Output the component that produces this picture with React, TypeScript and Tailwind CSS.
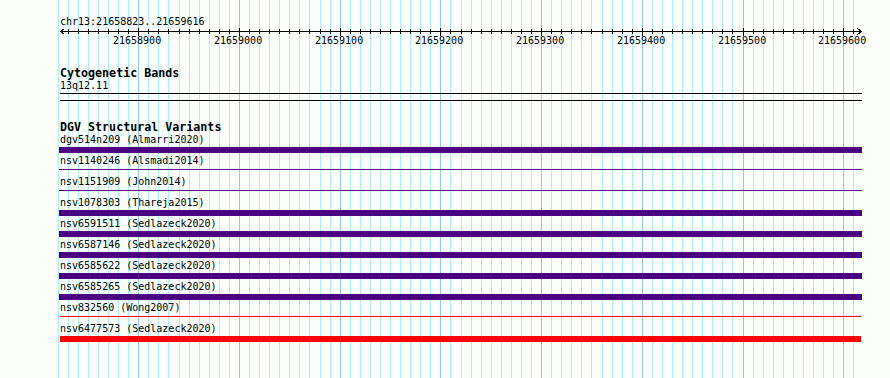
import React from "react";

const mono = "font-['DejaVu_Sans_Mono',monospace]";

// 10 bp per grid step, ~1.007 px per bp
const gridX = (i: number) => Math.round(57.7 + i * 10.071);
const GRID = Array.from({ length: 80 }, (_, i) => i);

const rows = [
  { label: "dgv514n209 (Almarri2020)", kind: "thick", tone: "purple" },
  { label: "nsv1140246 (Alsmadi2014)", kind: "thin", tone: "purple" },
  { label: "nsv1151909 (John2014)", kind: "thin", tone: "purple" },
  { label: "nsv1078303 (Thareja2015)", kind: "thick", tone: "purple" },
  { label: "nsv6591511 (Sedlazeck2020)", kind: "thick", tone: "purple" },
  { label: "nsv6587146 (Sedlazeck2020)", kind: "thick", tone: "purple" },
  { label: "nsv6585622 (Sedlazeck2020)", kind: "thick", tone: "purple" },
  { label: "nsv6585265 (Sedlazeck2020)", kind: "thick", tone: "purple" },
  { label: "nsv832560 (Wong2007)", kind: "thin", tone: "red" },
  { label: "nsv6477573 (Sedlazeck2020)", kind: "thick", tone: "red" },
];

function Grid() {
  return (
    <svg className="absolute inset-0" width={890} height={378} shapeRendering="crispEdges">
      {GRID.map((i) => (
        <rect
          key={i}
          x={gridX(i)}
          y={0}
          width={1}
          height={378}
          fill={i % 10 === 8 ? "#8ccbea" : "#aeeef2"}
        />
      ))}
    </svg>
  );
}

function Ruler() {
  const ticks = GRID.filter((i) => i >= 1);
  return (
    <svg width={890} height={22} shapeRendering="crispEdges" className="block">
      <rect x={60} y={3} width={802} height={1} fill="#000" />
      {ticks.map((i) => {
        const major = i % 10 === 8;
        return (
          <rect
            key={i}
            x={gridX(i)}
            y={major ? 0 : 1}
            width={1}
            height={major ? 8 : 5}
            fill="#000"
          />
        );
      })}
      <path d="M60.5 3.5 L64.5 0.5 M60.5 3.5 L64.5 6.5" stroke="#000" strokeWidth={1} fill="none" />
      <path d="M861.5 3.5 L857.5 0.5 M861.5 3.5 L857.5 6.5" stroke="#000" strokeWidth={1} fill="none" />
      {ticks
        .filter((i) => i % 10 === 8)
        .map((i) => (
          <text
            key={i}
            x={gridX(i) - 25}
            y={16}
            fontFamily="DejaVu Sans Mono, monospace"
            fontSize={10}
            fill="#000"
          >
            {21658820 + i * 10}
          </text>
        ))}
    </svg>
  );
}

function Variant({ label, kind, tone }: { label: string; kind: string; tone: string }) {
  const color = tone === "red" ? "bg-[#ff0000]" : "bg-[#4b0082]";
  const span = tone === "red" ? "ml-[60px] w-[801px]" : "ml-[59px] w-[803px]";
  return (
    <div className="h-[21px]">
      <div className="ml-[60px] h-[13px] text-[10px] leading-[13px]">{label}</div>
      <div className="mt-px h-[6px]">
        {kind === "thick" ? (
          <div className={`h-[6px] ${span} ${color}`} />
        ) : (
          <div className={`mt-[2px] h-px ${span} ${color}`} />
        )}
      </div>
    </div>
  );
}

export default function App() {
  return (
    <div className={`relative h-[378px] w-[890px] overflow-hidden bg-[#fbfefb] text-black ${mono}`}>
      <Grid />
      <div className="relative pt-[15px]">
        <div className="ml-[60px] h-[13px] text-[10px] leading-[13px]">chr13:21658823..21659616</div>
        <Ruler />

        <div className="mt-[17px] ml-[60px] h-[12px] text-[11.67px] font-bold leading-[12px]">
          Cytogenetic Bands
        </div>
        <div className="ml-[60px] h-[13px] text-[10px] leading-[13px]">13q12.11</div>
        <div className="mt-px ml-[60px] h-[8px] w-[802px] border-y border-black" />

        <div className="mt-[20px] ml-[60px] h-[12px] text-[11.67px] font-bold leading-[12px]">
          DGV Structural Variants
        </div>
        {rows.map((r) => (
          <Variant key={r.label} {...r} />
        ))}
      </div>
    </div>
  );
}
